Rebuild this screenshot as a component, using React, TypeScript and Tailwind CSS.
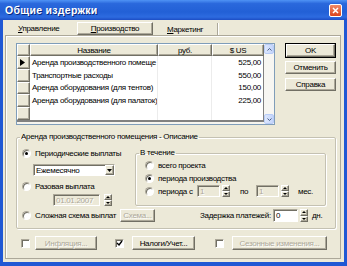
import React from "react";

const raised =
  "border border-t-white border-l-white border-b-[#716f64] border-r-[#716f64] shadow-[inset_-1px_-1px_0_#aca899]";
const sunken =
  "border border-t-[#aca899] border-l-[#aca899] border-b-white border-r-white shadow-[inset_1px_1px_0_#716f64]";
const disabledText = "text-[#aca899] [text-shadow:1px_1px_0_#fff]";

function Radio({ checked }: { checked?: boolean }) {
  return (
    <span className="w-[9px] h-[9px] shrink-0 rounded-full bg-white border border-t-[#aca899] border-l-[#aca899] border-b-white border-r-white shadow-[inset_1px_1px_0_#716f64] flex items-center justify-center">
      {checked && <span className="w-[3px] h-[3px] rounded-full bg-black" />}
    </span>
  );
}

function Check({ checked }: { checked?: boolean }) {
  return (
    <span className={`w-[9px] h-[9px] shrink-0 bg-white ${sunken} flex items-center justify-center`}>
      {checked && (
        <svg width="7" height="7" viewBox="0 0 7 7">
          <path d="M1 3 L3 5 L6 1" stroke="#000" strokeWidth="1.4" fill="none" />
        </svg>
      )}
    </span>
  );
}

function Btn({
  children,
  className = "",
  disabled,
  def,
}: {
  children: React.ReactNode;
  className?: string;
  disabled?: boolean;
  def?: boolean;
}) {
  const inner = (
    <div
      className={`${raised} bg-[#ece9d8] flex items-center justify-center h-full w-full whitespace-nowrap ${
        disabled ? disabledText : "text-black"
      }`}
    >
      {children}
    </div>
  );
  if (def)
    return <div className={`border border-black ${className}`}>{inner}</div>;
  return <div className={className}>{inner}</div>;
}

function Spin({ className = "" }: { className?: string }) {
  return (
    <div className={`flex flex-col w-[8px] shrink-0 ${className}`}>
      <div className={`${raised} bg-[#ece9d8] flex-1 flex items-center justify-center`}>
        <svg width="4" height="2" viewBox="0 0 4 2">
          <path d="M0 2 L2 0 L4 2 Z" fill="#000" />
        </svg>
      </div>
      <div className={`${raised} bg-[#ece9d8] flex-1 flex items-center justify-center`}>
        <svg width="4" height="2" viewBox="0 0 4 2">
          <path d="M0 0 L2 2 L4 0 Z" fill="#000" />
        </svg>
      </div>
    </div>
  );
}

function ScrollArrow({ up }: { up?: boolean }) {
  return (
    <div className="h-[10px] w-[10px] bg-[linear-gradient(to_right,#dde7fd,#c3d4fb)] border border-[#b8ccf7] rounded-[2px] flex items-center justify-center">
      <svg width="5" height="3" viewBox="0 0 5 3">
        <path
          d={up ? "M0.5 2.5 L2.5 0.5 L4.5 2.5" : "M0.5 0.5 L2.5 2.5 L4.5 0.5"}
          stroke="#4d6185"
          strokeWidth="1"
          fill="none"
        />
      </svg>
    </div>
  );
}

const rows = [
  { name: "Аренда производственного помеще", usd: "525,00" },
  { name: "Транспортные расходы", usd: "550,00" },
  { name: "Аренда оборудования (для тентов)", usd: "150,00" },
  { name: "Аренда оборудования (для палаток)", usd: "225,00" },
  { name: "", usd: "" },
];

export default function App() {
  return (
    <div className="w-[347px] h-[266px] bg-[#2058d4] flex flex-col overflow-hidden font-['Liberation_Sans',Arial,sans-serif] text-[8px] tracking-[-0.3px] leading-[11px] text-black whitespace-nowrap">
      {/* Title bar */}
      <div className="h-[20px] shrink-0 flex items-center justify-between pl-[5px] pr-[5px] bg-[linear-gradient(to_bottom,#4f93f5_0%,#2a68dc_18%,#2260d6_60%,#2d6be0_85%,#1c4dc4_100%)]">
        <span className="text-white font-bold text-[10.5px] tracking-[0.3px] [text-shadow:1px_1px_0_#0a2a80]">
          Общие издержки
        </span>
        <div className="w-[13px] h-[13px] rounded-[2px] border border-white bg-[linear-gradient(to_bottom,#f08a68,#d9441c)] flex items-center justify-center">
          <svg width="7" height="7" viewBox="0 0 7 7">
            <path d="M1 1 L6 6 M6 1 L1 6" stroke="#fff" strokeWidth="1.5" />
          </svg>
        </div>
      </div>

      {/* Body */}
      <div className="flex-1 mx-[3px] mb-[4px] bg-[#ece9d8] flex flex-col">
        {/* Tabs */}
        <div className="h-[15px] shrink-0 flex items-end pl-[7px]">
          <div className="w-[60px] h-[13px] flex items-center pl-[8px]">
            <span>
              <u>У</u>правление
            </span>
          </div>
          <div className={`ml-[7px] w-[76px] h-[13px] ${raised} flex items-center justify-center`}>
            <span>
              <u>П</u>роизводство
            </span>
          </div>
          <div className="ml-[7px] w-[58px] h-[12px] flex items-center pl-[7px] border-r border-r-[#aca899] shadow-[1px_0_0_#fff]">
            <span>
              <u>М</u>аркетинг
            </span>
          </div>
        </div>

        {/* Panel */}
        <div className="flex-1 ml-[2px] mr-[3px] mb-[3px] border border-[#aca899] shadow-[inset_1px_1px_0_#fff] flex flex-col">
          {/* Grid and buttons */}
          <div className="flex pt-[7px] pl-[10px]">
            <div className="w-[259px] h-[82px] border border-[#7f9db9] bg-white flex">
              <div className="w-[247px] flex flex-col">
                {/* header */}
                <div className="flex h-[12px] shrink-0">
                  <div className={`w-[13px] ${raised} bg-[#ece9d8]`} />
                  <div className={`w-[128px] ${raised} bg-[#ece9d8] flex items-center justify-center`}>Название</div>
                  <div className={`w-[54px] ${raised} bg-[#ece9d8] flex items-center justify-center`}>руб.</div>
                  <div className={`w-[52px] ${raised} bg-[#ece9d8] flex items-center justify-center`}>$ US</div>
                </div>
                {rows.map((r, i) => (
                  <div key={i} className="flex h-[12.8px] shrink-0">
                    <div className={`w-[13px] ${raised} bg-[#ece9d8] flex items-center pl-[2px]`}>
                      {i === 0 && (
                        <svg width="5" height="7" viewBox="0 0 5 7">
                          <path d="M0 0 L5 3.5 L0 7 Z" fill="#000" />
                        </svg>
                      )}
                    </div>
                    <div className="w-[128px] flex items-center pl-[2px] overflow-hidden border-r border-r-[#ececec]">
                      {r.name}
                    </div>
                    <div className="w-[54px] border-r border-r-[#ececec]" />
                    <div className="w-[52px] flex items-center justify-end pr-[2px] border-r border-r-[#808080]">
                      {r.usd}
                    </div>
                  </div>
                ))}
                <div className="h-[2px] bg-[#808080] shrink-0" />
                <div className="flex-1 bg-[#f5f4ee]" />
              </div>
              <div className="w-[10px] flex flex-col justify-between bg-[#f7f6f2]">
                <ScrollArrow up />
                <ScrollArrow />
              </div>
            </div>
            <div className="ml-[10px] w-[51px] flex flex-col">
              <Btn def className="h-[15px]">OK</Btn>
              <Btn className="h-[13px] mt-[3px]">Отменить</Btn>
              <Btn className="h-[13px] mt-[4px]">Справка</Btn>
            </div>
          </div>

          {/* Group box */}
          <fieldset className="mt-[6px] ml-[10px] mr-[4px] border border-[#c4c1b2] rounded-[2px] shadow-[inset_1px_1px_0_#fff,1px_1px_0_#fff] pb-[6px]">
            <legend className="ml-[3px] px-[1px] leading-[12px]">
              Аренда производственного помещения - Описание
            </legend>
            <div className="flex">
              <div className="w-[118px] shrink-0 pl-[5px] flex flex-col">
                <div className="mt-[4px] h-[12px] flex items-center gap-[4px]">
                  <Radio checked />
                  <span>Периодические выплаты</span>
                </div>
                <div className={`mt-[5px] ml-[11px] w-[82px] h-[12px] bg-white ${sunken} flex items-center justify-between`}>
                  <span className="pl-[2px]">Ежемесячно</span>
                  <div className={`w-[9px] h-full ${raised} bg-[#ece9d8] flex items-center justify-center`}>
                    <svg width="5" height="3" viewBox="0 0 5 3">
                      <path d="M0 0 L5 0 L2.5 3 Z" fill="#000" />
                    </svg>
                  </div>
                </div>
                <div className="mt-[4px] h-[12px] flex items-center gap-[4px]">
                  <Radio />
                  <span>Разовая выплата</span>
                </div>
                <div className="mt-[2px] ml-[31px] flex items-center">
                  <div className={`w-[47px] h-[12px] bg-[#ece9d8] ${sunken} flex items-center pl-[2px] ${disabledText}`}>
                    01.01.2007
                  </div>
                  <Spin className="ml-[4px] h-[12px]" />
                </div>
              </div>
              <fieldset className="mt-[4px] w-[191px] shrink-0 border border-[#c4c1b2] rounded-[2px] shadow-[inset_1px_1px_0_#fff,1px_1px_0_#fff] pb-[4px]">
                <legend className="ml-[3px] px-[1px] leading-[12px]">В течение</legend>
                <div className="pl-[9px] flex flex-col">
                  <div className="h-[12px] flex items-center gap-[4px]">
                    <Radio />
                    <span>всего проекта</span>
                  </div>
                  <div className="mt-[1px] h-[12px] flex items-center gap-[4px]">
                    <Radio checked />
                    <span>периода производства</span>
                  </div>
                  <div className="mt-[1px] h-[12px] flex items-center">
                    <Radio />
                    <span className="ml-[4px] w-[39px] shrink-0">периода с</span>
                    <div className={`w-[23px] h-[12px] shrink-0 bg-[#ece9d8] ${sunken} flex items-center pl-[2px] ${disabledText}`}>1</div>
                    <Spin className="ml-[2px] h-[12px]" />
                    <span className="ml-[10px] w-[16px] shrink-0">по</span>
                    <div className={`w-[23px] h-[12px] shrink-0 bg-[#ece9d8] ${sunken} flex items-center pl-[2px] ${disabledText}`}>1</div>
                    <Spin className="ml-[2px] h-[12px]" />
                    <span className="ml-[9px]">мес.</span>
                  </div>
                </div>
              </fieldset>
            </div>
            <div className="mt-[3px] h-[13px] pl-[5px] grid grid-cols-[9px_89px_35px_118px_25px_10px_auto] items-center">
              <Radio />
              <span className="pl-[4px]">Сложная схема выплат</span>
              <Btn disabled className="h-[13px]">Схема...</Btn>
              <span className="pl-[45px]">Задержка платежей:</span>
              <div className={`h-[13px] bg-white ${sunken} flex items-center pl-[2px]`}>0</div>
              <Spin className="ml-[2px] h-[13px]" />
              <span className="pl-[4px]">дн.</span>
            </div>
          </fieldset>

          {/* Bottom row */}
          <div className="mt-[7px] h-[14px] pl-[15px] flex items-center">
            <Check />
            <Btn disabled className="ml-[5px] w-[62px] h-[14px] shrink-0">Инфляция...</Btn>
            <span className="ml-[18px]">
              <Check checked />
            </span>
            <Btn className="ml-[8px] w-[63px] h-[14px] shrink-0">Налоги/Учет...</Btn>
            <span className="ml-[20px]">
              <Check />
            </span>
            <Btn disabled className="ml-[8px] w-[95px] h-[14px] shrink-0">Сезонные изменения...</Btn>
          </div>
        </div>
      </div>
    </div>
  );
}
